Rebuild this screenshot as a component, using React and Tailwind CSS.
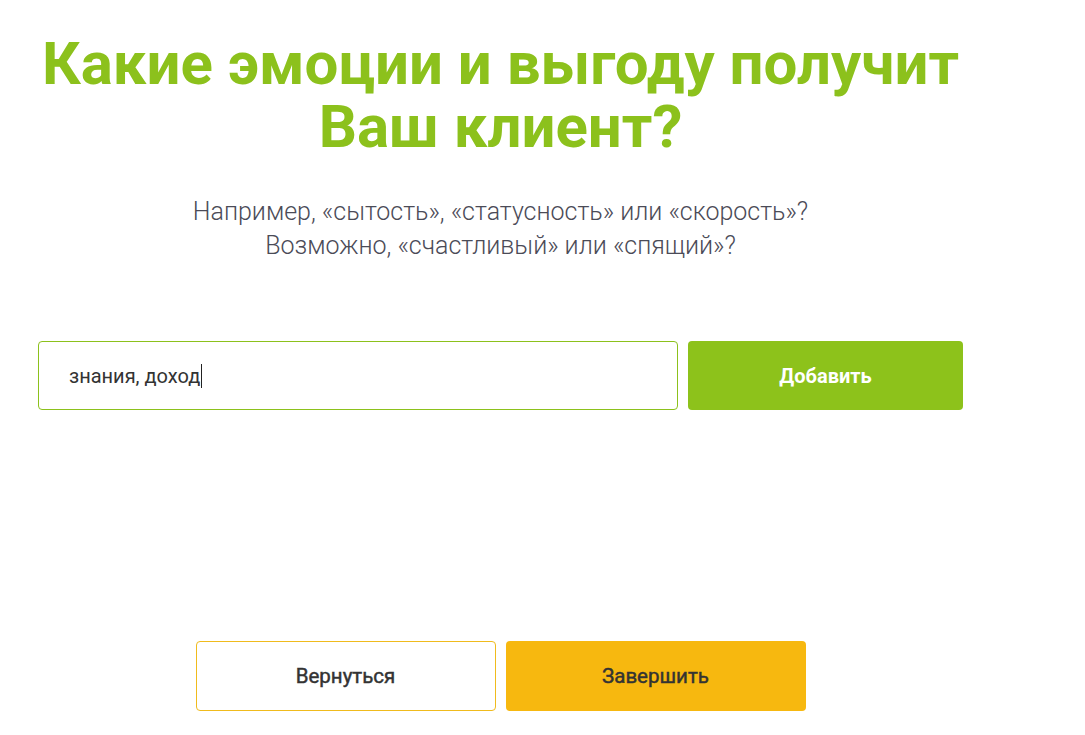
export default function App() {
  return (
    <div className="min-h-screen bg-white" style={{ fontFamily: 'Roboto, "Noto Sans", sans-serif' }}>
      <div className="ml-[38px] w-[925px] flex flex-col items-center pt-[32px]">
        <h1 className="text-[60px] leading-[63px] font-bold text-[#8cc11c] text-center whitespace-nowrap">
          <span className="block">Какие эмоции и выгоду получит</span>
          <span className="block">Ваш клиент?</span>
        </h1>
        <p className="mt-[37px] text-[25px] leading-[34px] font-light text-[#4b4b57] text-center whitespace-nowrap">
          Например, «сытость», «статусность» или «скорость»?
          <br />
          Возможно, «счастливый» или «спящий»?
        </p>
        <div className="mt-[78px] w-full flex gap-[10px]">
          <div className="flex-1 h-[69px] border border-[#8cc11c] rounded-[4px] flex items-center pl-[30px]">
            <span className="text-[20px] text-[#333333]">знания, доход</span>
            <span className="w-px h-[24px] bg-[#222] ml-[1px]" />
          </div>
          <button className="w-[275px] h-[69px] rounded-[4px] bg-[#8dc21b] text-white text-[20px] font-bold">
            Добавить
          </button>
        </div>
        <div className="mt-[231px] flex gap-[10px]">
          <button className="w-[300px] h-[70px] border border-[#f0bb1d] rounded-[4px] bg-white text-[#333333] text-[20.5px] font-normal [-webkit-text-stroke:0.45px_#333333]">
            Вернуться
          </button>
          <button className="w-[300px] h-[70px] rounded-[4px] bg-[#f7b80f] text-[#333333] text-[20.5px] font-normal [-webkit-text-stroke:0.45px_#333333]">
            Завершить
          </button>
        </div>
      </div>
    </div>
  );
}
